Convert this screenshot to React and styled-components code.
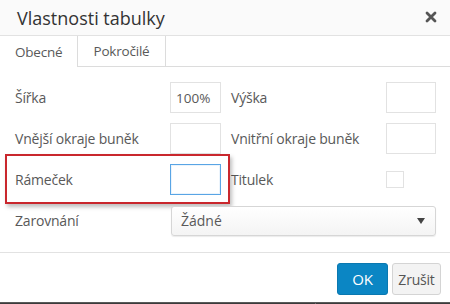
import React from 'react'
import styled, { createGlobalStyle } from 'styled-components'

const GlobalStyle = createGlobalStyle`
  html, body {
    margin: 0;
    padding: 0;
    background: #fff;
  }
  body {
    width: 450px;
    height: 304px;
    overflow: hidden;
    font-family: 'Open Sans', 'Noto Sans', sans-serif;
    color: #595959;
  }
  * {
    box-sizing: border-box;
  }
`

const Window = styled.div`
  display: flex;
  flex-direction: column;
  width: 450px;
  height: 304px;
  background: #fff;
`

const Head = styled.div`
  display: flex;
  align-items: center;
  justify-content: space-between;
  height: 36px;
  padding: 0 13px 0 17px;
  background: #fafafa;
  border-bottom: 1px solid #e2e2e2;
`

const Title = styled.h1`
  margin: 0;
  font-size: 18px;
  font-weight: 400;
  color: #333;
  line-height: 36px;
`

const Close = styled.span`
  display: flex;
  align-items: center;
  margin-top: -1px;
`

const TabBar = styled.div`
  display: flex;
  height: 31px;
  border-bottom: 1px solid #dcdcdc;
`

const Tab = styled.div`
  display: flex;
  align-items: center;
  padding: 0 15px;
  font-size: 13.5px;
  letter-spacing: -0.2px;
  color: #595959;
  background: #fff;
  border-right: 1px solid #dcdcdc;
  margin-bottom: ${p => (p.$active ? '-1px' : '0')};
  height: ${p => (p.$active ? '31px' : '30px')};
`

const Form = styled.div`
  display: flex;
  flex-direction: column;
  gap: 10px;
  padding: 15px 14px 16px 15px;
`

const Row = styled.div`
  position: relative;
  display: flex;
  align-items: center;
  height: 31px;
`

const Label = styled.label`
  font-size: 14px;
  letter-spacing: -0.2px;
  color: #595959;
  white-space: nowrap;
  width: ${p => (p.$second ? 'auto' : '155px')};
  flex: ${p => (p.$second ? '1' : 'none')};
  margin-left: ${p => (p.$second ? '10px' : '0')};
`

const TextBox = styled.div`
  display: flex;
  align-items: center;
  width: ${p => p.$w || 51}px;
  height: 31px;
  padding: 0 5px;
  font-size: 13.5px;
  color: #595959;
  background: #fff;
  border: 1px solid ${p => (p.$focus ? '#59a5e5' : '#e2e2e2')};
  box-shadow: ${p => (p.$focus ? 'inset 0 0 0 1px rgba(89,165,229,0.12)' : 'none')};
`

const CheckBox = styled.div`
  width: 18px;
  height: 17px;
  margin-right: 32px;
  border: 1px solid #e2e2e2;
  background: #fff;
`

const Highlight = styled.div`
  position: absolute;
  left: -10px;
  top: -10px;
  width: 225px;
  height: 50px;
  border: 2px solid #c9272d;
  box-shadow: 2px 3px 4px rgba(0, 0, 0, 0.25);
  pointer-events: none;
`

const Select = styled.div`
  display: flex;
  align-items: center;
  justify-content: space-between;
  width: 265px;
  height: 30px;
  margin-left: 1px;
  padding: 0 9px 0 9px;
  font-size: 14px;
  color: #595959;
  border: 1px solid #d6d6d6;
  border-radius: 3px;
  background: linear-gradient(#fff, #f4f4f4);
  box-shadow: 0 1px 1px rgba(0, 0, 0, 0.08);
`

const Caret = styled.span`
  width: 0;
  height: 0;
  border-left: 4px solid transparent;
  border-right: 4px solid transparent;
  border-top: 6px solid #444;
  margin-right: 1px;
`

const Foot = styled.div`
  display: flex;
  justify-content: flex-end;
  gap: 4px;
  padding: 10px 9px 0 0;
  height: 50px;
  border-top: 1px solid #e2e2e2;
`

const Button = styled.button`
  height: 32px;
  padding: 0;
  width: ${p => (p.$primary ? '51px' : '49px')};
  font-family: inherit;
  font-size: ${p => (p.$primary ? '15px' : '14px')};
  letter-spacing: -0.2px;
  color: ${p => (p.$primary ? '#fff' : '#555')};
  background: ${p => (p.$primary ? '#0b86c4' : '#f3f3f3')};
  border: 1px solid ${p => (p.$primary ? '#0a78b0' : '#d4d4d4')};
  border-radius: 3px;
`

const Backdrop = styled.div`
  display: flex;
  flex: 1;
  background: #3b3b3b;
  border-top: 1px solid #5a5a5a;
`

const BackdropPane = styled.div`
  width: ${p => p.$w}px;
  border-right: 1px solid #6a6a6a;
`

const CloseIcon = () => (
  <svg width="12" height="12" viewBox="0 0 12 12">
    <path d="M2 2 L10 10 M10 2 L2 10" stroke="#555" strokeWidth="2.8" strokeLinecap="round" />
  </svg>
)

export default function App() {
  return (
    <>
      <GlobalStyle />
      <Window>
        <Head>
          <Title>Vlastnosti tabulky</Title>
          <Close>
            <CloseIcon />
          </Close>
        </Head>
        <TabBar>
          <Tab $active>Obecné</Tab>
          <Tab>Pokročilé</Tab>
        </TabBar>
        <Form>
          <Row>
            <Label>Šířka</Label>
            <TextBox>100%</TextBox>
            <Label $second>Výška</Label>
            <TextBox $w={50} />
          </Row>
          <Row>
            <Label>Vnější okraje buněk</Label>
            <TextBox />
            <Label $second>Vnitřní okraje buněk</Label>
            <TextBox $w={50} />
          </Row>
          <Row>
            <Highlight />
            <Label>Rámeček</Label>
            <TextBox $focus />
            <Label $second>Titulek</Label>
            <CheckBox />
          </Row>
          <Row>
            <Label>Zarovnání</Label>
            <Select>
              Žádné
              <Caret />
            </Select>
          </Row>
        </Form>
        <Foot>
          <Button $primary>OK</Button>
          <Button>Zrušit</Button>
        </Foot>
        <Backdrop>
          <BackdropPane $w={316} />
        </Backdrop>
      </Window>
    </>
  )
}
